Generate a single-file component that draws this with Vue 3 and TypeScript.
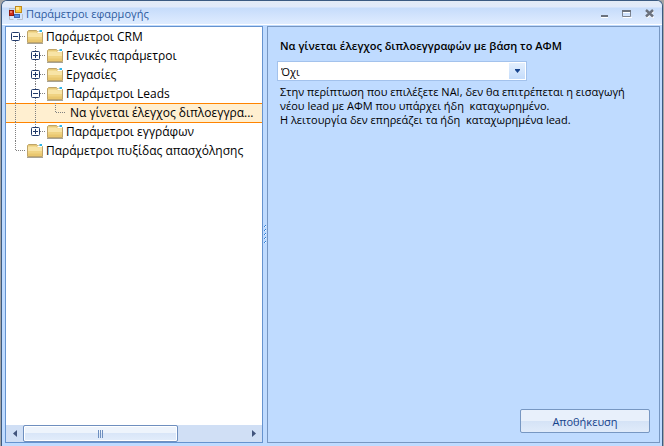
<script setup lang="ts">
import { ref } from 'vue'

type Gutter = { up?: boolean; down?: boolean; across?: boolean; box?: 'plus' | 'minus' }
type Row = { label: string; gutters: Gutter[]; folder: boolean }

const rows: Row[] = [
  { label: 'Παράμετροι CRM', folder: true, gutters: [{ down: true, across: true, box: 'minus' }] },
  {
    label: 'Γενικές παράμετροι',
    folder: true,
    gutters: [{ up: true, down: true }, { up: true, down: true, across: true, box: 'plus' }],
  },
  {
    label: 'Εργασίες',
    folder: true,
    gutters: [{ up: true, down: true }, { up: true, down: true, across: true, box: 'plus' }],
  },
  {
    label: 'Παράμετροι Leads',
    folder: true,
    gutters: [{ up: true, down: true }, { up: true, down: true, across: true, box: 'minus' }],
  },
  {
    label: 'Να γίνεται έλεγχος διπλοεγγρα...',
    folder: false,
    gutters: [{ up: true, down: true }, { up: true, down: true }, { up: true, across: true }],
  },
  {
    label: 'Παράμετροι εγγράφων',
    folder: true,
    gutters: [{ up: true, down: true }, { up: true, across: true, box: 'plus' }],
  },
  { label: 'Παράμετροι πυξίδας απασχόλησης', folder: true, gutters: [{ up: true, across: true }] },
]

const selected = ref(4)
const duplicateCheck = ref('Όχι')
</script>

<template>
  <div class="window">
    <header class="titlebar">
      <svg class="app-icon" width="14" height="14" viewBox="0 0 14 14" aria-hidden="true">
        <path d="M1 2.500h5M.5 2v11.500h4M8 13.500h5.500V8" stroke="#b9c0cc" fill="none" />
        <rect x="0.500" y="4.500" width="4" height="5" fill="#d2301a" stroke="#8f1a10" />
        <rect x="1" y="5" width="2" height="2" fill="#ef7a60" />
        <rect x="6.500" y="0.500" width="6" height="6" fill="#fccb3f" stroke="#c08a1c" />
        <rect x="7" y="1" width="3" height="3" fill="#ffe795" />
        <rect x="5.500" y="8.500" width="5" height="3" fill="#5b8fe6" stroke="#3c66b4" />
      </svg>
      <h1>Παράμετροι εφαρμογής</h1>
      <div class="controls">
        <button type="button" aria-label="Ελαχιστοποίηση">
          <svg width="9" height="9" viewBox="0 0 9 9"><path d="M1 8.500h7" stroke="#fff" /><path d="M1 7h7" stroke="#6b727e" stroke-width="2" /></svg>
        </button>
        <button type="button" aria-label="Μεγιστοποίηση">
          <svg width="10" height="9" viewBox="0 0 10 9"><path d="M1 8.500h9" stroke="#fff" fill="none" /><path d="M.5 1v6.500h8V1" stroke="#7d8490" fill="none" /><path d="M0 2h9" stroke="#6b727e" stroke-width="2" /><path d="M1 3.500h7" stroke="#fff" /></svg>
        </button>
        <button type="button" aria-label="Κλείσιμο">
          <svg width="10" height="9" viewBox="0 0 10 9"><path d="M1.500 2l7 7M8.500 2l-7 7" stroke="#fff" stroke-width="2" /><path d="M1 1l7 6.500M8 1L1 7.500" stroke="#6b727e" stroke-width="2.400" /></svg>
        </button>
      </div>
    </header>

    <main class="body">
      <section class="tree-panel">
        <ul class="tree" role="tree">
          <li
            v-for="(row, i) in rows"
            :key="row.label"
            class="row"
            :class="{ selected: i === selected }"
            role="treeitem"
            :aria-selected="i === selected"
            @click="selected = i"
          >
            <svg v-for="(g, n) in row.gutters" :key="n" class="gutter" width="20" height="19" viewBox="0 0 20 19" aria-hidden="true">
              <g stroke="#808080" stroke-dasharray="1 1" fill="none">
                <path v-if="g.up" d="M9.500 0v10" />
                <path v-if="g.down" d="M9.500 10v9" />
                <path v-if="g.across" d="M10 9.500h10" />
              </g>
              <g v-if="g.box">
                <rect x="5.500" y="5.500" width="8" height="8" rx="1" fill="#fff" stroke="#213a6b" />
                <path d="M7 9.500h5" stroke="#213a6b" />
                <path v-if="g.box === 'plus'" d="M9.500 7v5" stroke="#213a6b" />
              </g>
            </svg>
            <svg v-if="row.folder" class="folder" width="16" height="14" viewBox="0 0 16 14" aria-hidden="true">
              <path d="M.5 12.500v-11l1-1h8l1 1h4l1 1v10z" fill="#e6c878" stroke="#bfa468" />
              <path d="M11 1.500h4v2h-5z" fill="#fff" />
              <path d="M12.500 1h2.500" stroke="#2fb4e6" stroke-width="2" />
              <path d="M1 2.500h8l1.500 1h4.500V12H1z" fill="#f0d382" />
              <path d="M1 2.500h8l1.500 1h4.500V7H1z" fill="#f8e4a6" />
              <path d="M1 9.500h14V12H1z" fill="#e9c76f" />
              <path d="M0 13.500h16" stroke="#a8a394" />
            </svg>
            <span :class="{ leaf: !row.folder }">{{ row.label }}</span>
          </li>
        </ul>
        <div class="scrollbar">
          <button type="button" class="arrow" aria-label="Κύλιση αριστερά">
            <svg width="4" height="7" viewBox="0 0 4 7"><path d="M4 0v7L0 3.500z" fill="#41547c" /></svg>
          </button>
          <div class="track">
            <div class="thumb"><i /><i /><i /></div>
          </div>
          <button type="button" class="arrow" aria-label="Κύλιση δεξιά">
            <svg width="4" height="7" viewBox="0 0 4 7"><path d="M0 0v7l4-3.500z" fill="#41547c" /></svg>
          </button>
        </div>
      </section>

      <div class="splitter" role="separator">
        <svg width="3" height="20" viewBox="0 0 3 20" aria-hidden="true">
          <g v-for="n in 5" :key="n">
            <rect x="0" :y="n * 4 - 3" width="1" height="1" fill="#2f7fd6" />
            <rect x="1" :y="n * 4 - 4" width="1" height="1" fill="#2f7fd6" />
            <rect x="1" :y="n * 4 - 3" width="1" height="1" fill="#fff" />
          </g>
        </svg>
      </div>

      <form class="detail" @submit.prevent>
        <label for="duplicate-check">Να γίνεται έλεγχος διπλοεγγραφών με βάση το ΑΦΜ</label>
        <div class="combo">
          <select id="duplicate-check" v-model="duplicateCheck">
            <option>Όχι</option>
          </select>
          <span class="drop" aria-hidden="true">
            <svg width="7" height="4" viewBox="0 0 7 4"><path d="M1 0h5v1L3.500 4 1 1z" fill="#15428b" /></svg>
          </span>
        </div>
        <p>
          Στην περίπτωση που επιλέξετε ΝΑΙ, δεν θα επιτρέπεται η εισαγωγή<br />
          νέου lead με ΑΦΜ που υπάρχει ήδη&nbsp; καταχωρημένο.<br />
          Η λειτουργία δεν επηρεάζει τα ήδη&nbsp; καταχωρημένα lead.
        </p>
        <footer>
          <button type="submit" class="save">Αποθήκευση</button>
        </footer>
      </form>
    </main>
  </div>
</template>

<style>
body {
  margin: 0;
  background: #a5a5a5;
}
</style>

<style scoped>
* {
  box-sizing: border-box;
}

.window {
  display: flex;
  flex-direction: column;
  height: 100vh;
  margin: 0 1px;
  border: 1px solid #3b5a82;
  border-bottom: 0;
  border-radius: 6px 6px 0 0;
  background: #bfdbff;
  color: #000;
  font: 11px/15px 'Open Sans', 'Noto Sans', sans-serif;
  overflow: hidden;
}

.titlebar {
  display: flex;
  align-items: center;
  gap: 3px;
  flex: none;
  height: 24px;
  padding: 1px 4px 0 7px;
  border-bottom: 1px solid #fff;
  background: linear-gradient(#e3ebf6 0, #e1eafa 6px, #c6dcfb 7px, #dfecff 100%);
}

.titlebar h1 {
  flex: 1;
  margin: 0;
  color: #2f5c9f;
  font-size: 11px;
  font-weight: 400;
}

.controls {
  display: flex;
  gap: 7px;
}

button {
  padding: 0;
  border: 0;
  background: none;
  font: inherit;
}

.controls button {
  display: grid;
  place-items: center;
  width: 16px;
  height: 16px;
}

.body {
  display: grid;
  grid-template-columns: 258px 4px minmax(0, 1fr);
  flex: 1;
  min-height: 0;
  padding: 1px 2px 3px 3px;
}

.tree-panel {
  display: flex;
  flex-direction: column;
  border: 1px solid #6593cf;
  background: #fff;
  min-width: 0;
}

.tree {
  flex: 1;
  margin: 0;
  padding: 0;
  list-style: none;
  font-size: 12px;
}

.row {
  display: flex;
  align-items: center;
  height: 19px;
  white-space: nowrap;
}

.row.selected {
  background: #ffefd0;
  box-shadow: inset 0 1px #ff8400, 0 1px #ff8400;
}

.gutter {
  flex: none;
}

.folder {
  flex: none;
  margin: 0 3px 0 1px;
}

.leaf {
  padding-left: 4px;
}

.scrollbar {
  display: flex;
  height: 17px;
  background: #d0dff5;
}

.arrow {
  display: grid;
  place-items: center;
  width: 17px;
}

.track {
  flex: 1;
}

.thumb {
  display: flex;
  align-items: center;
  justify-content: center;
  gap: 1px;
  width: 70%;
  height: 17px;
  border: 1px solid #6e8fbf;
  border-radius: 2px;
  background: linear-gradient(#eef4fc 0 45%, #d9e6f8 50%, #e3edfb);
  box-shadow: inset 0 0 0 1px #fff;
}

.thumb i {
  width: 1px;
  height: 8px;
  background: #6e8fbf;
}

.splitter {
  display: flex;
  align-items: center;
  justify-content: center;
}

.detail {
  display: flex;
  flex-direction: column;
  align-items: flex-start;
  padding: 11px 9px 9px 9px;
  border: 1px solid #7797c2;
}

.detail label {
  padding-left: 3px;
  font-weight: 600;
}

.combo {
  display: grid;
  grid-template-columns: 1fr 17px;
  width: 250px;
  max-width: 100%;
  height: 20px;
  margin-top: 8px;
  border: 1px solid #a3c2ec;
  background: #fff;
}

.combo select {
  grid-area: 1 / 1 / 2 / 3;
  appearance: none;
  margin: 0;
  padding: 0 3px;
  border: 0;
  background: none;
  color: inherit;
  font: inherit;
}

.drop {
  display: grid;
  grid-area: 1 / 2;
  place-items: center;
  margin: 1px 1px 1px 0;
  background: linear-gradient(#e3effe, #c4dcfb);
  pointer-events: none;
}

.detail p {
  margin: 4px 0 0 3px;
  line-height: 14px;
}

.detail footer {
  display: flex;
  align-self: stretch;
  justify-content: flex-end;
  margin-top: auto;
}

.save {
  width: 130px;
  height: 24px;
  border: 1px solid #7797c2;
  border-radius: 2px;
  background: linear-gradient(#e8f0fb 0 48%, #d5e3f6 52%, #e0ebfa);
  color: #15428b;
}
</style>
